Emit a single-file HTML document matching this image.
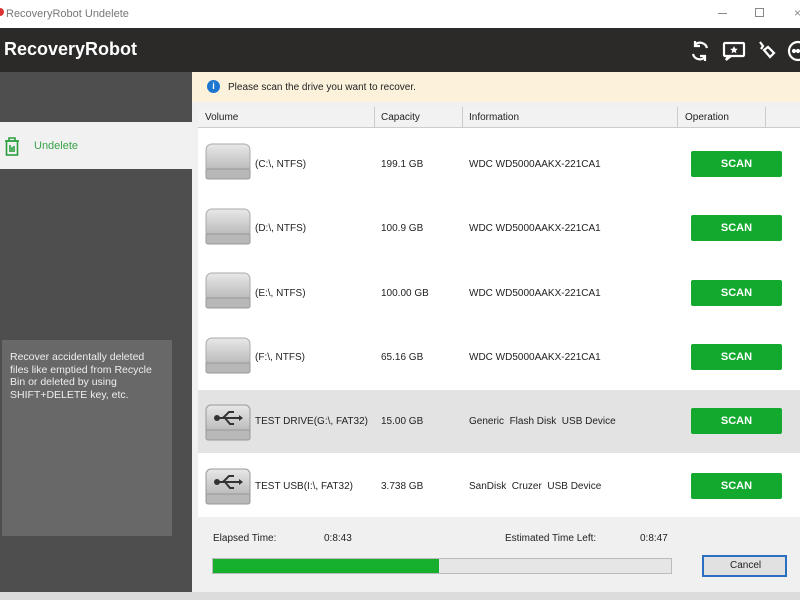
<!DOCTYPE html>
<html><head><style>
*{margin:0;padding:0;box-sizing:border-box}
body{width:800px;height:600px;overflow:hidden;background:#dcdcdc;font-family:"Liberation Sans",sans-serif;position:relative}
.abs{position:absolute}
.t{font-size:10px;color:#222;position:absolute;white-space:nowrap}
.scan{position:absolute;left:691px;width:91px;height:26px;background:#12a92e;border-radius:2px;color:#fff;font-weight:bold;font-size:11px;text-align:center;line-height:26px}
.drv{position:absolute;left:205px;width:46px;height:38px}
</style></head><body>
<div class="abs" style="left:0;top:0;width:800px;height:28px;background:#fff"></div>
<div class="abs" style="left:-4px;top:8px;width:8px;height:8px;border-radius:50%;background:#d33"></div>
<div class="t" style="left:6px;top:8px;font-size:11px;color:#777">RecoveryRobot Undelete</div>
<div class="abs" style="left:718px;top:13px;width:9px;height:1px;background:#888"></div>
<div class="abs" style="left:755px;top:8px;width:9px;height:9px;border:1px solid #888"></div>
<div class="t" style="left:794px;top:6px;font-size:12px;color:#888">×</div>
<div class="abs" style="left:0;top:28px;width:800px;height:44px;background:#2b2a29"></div>
<div class="t" style="left:4px;top:39px;font-size:18px;font-weight:bold;color:#fff">RecoveryRobot</div>
<svg class="abs" style="left:688px;top:38px" width="112" height="26" viewBox="0 0 112 26" fill="none" stroke="#fff" stroke-width="2.2">
<path d="M19 10a7 7 0 0 0-12-3M5 16a7 7 0 0 0 12 3"/><path d="M7 3v5h5M17 23v-5h-5" />
<rect x="36" y="5" width="20" height="13" rx="1"/><path d="M40 18l-2 4 5-4"/><path d="M46 8l1.2 2.6 2.6.3-2 1.8.6 2.6-2.4-1.4-2.4 1.4.6-2.6-2-1.8 2.6-.3z" fill="#fff" stroke="none"/>
<path d="M72 4l3 4-2 3"/><path d="M76 12l4-3 6 6-4 4z"/>
<circle cx="110" cy="13" r="9"/><circle cx="106" cy="13" r="1" fill="#fff"/><circle cx="110" cy="13" r="1" fill="#fff"/>
</svg>
<div class="abs" style="left:0;top:72px;width:192px;height:520px;background:#4e4e4e"></div>
<div class="abs" style="left:0;top:122px;width:192px;height:47px;background:#f1f1f1"></div>
<svg class="abs" style="left:4px;top:137px" width="16" height="19" viewBox="0 0 16 19" fill="none" stroke="#2aa040" stroke-width="1.6"><path d="M1 4h14M5 4V1h6v3"/><rect x="2.5" y="4" width="11" height="14"/><path d="M6 8v7M8 10v5M10 9v6"/></svg>
<div class="t" style="left:34px;top:140px;font-size:11px;color:#3aa34a">Undelete</div>
<div class="abs" style="left:2px;top:340px;width:170px;height:196px;background:#686868"></div>
<div class="t" style="left:10px;top:351px;font-size:10.5px;color:#eee;line-height:12.5px">Recover accidentally deleted<br>files like emptied from Recycle<br>Bin or deleted by using<br>SHIFT+DELETE key, etc.</div>
<div class="abs" style="left:192px;top:72px;width:608px;height:520px;background:#f0f0f0"></div>
<div class="abs" style="left:192px;top:72px;width:608px;height:30px;background:#fcf2dc"></div>
<div class="abs" style="left:207px;top:80px;width:13px;height:13px;border-radius:50%;background:#1d77d0;color:#fff;font-size:9px;font-weight:bold;text-align:center;line-height:13px">i</div>
<div class="t" style="left:228px;top:82px">Please scan the drive you want to recover.</div>
<div class="abs" style="left:198px;top:107px;width:602px;height:410px;background:#fff"></div>
<div class="abs" style="left:198px;top:107px;width:602px;height:21px;background:#f2f2f2;border-bottom:1px solid #ccc"></div>
<div class="abs" style="left:374px;top:107px;width:1px;height:21px;background:#ccc"></div>
<div class="abs" style="left:462px;top:107px;width:1px;height:21px;background:#ccc"></div>
<div class="abs" style="left:677px;top:107px;width:1px;height:21px;background:#ccc"></div>
<div class="abs" style="left:765px;top:107px;width:1px;height:21px;background:#ccc"></div>
<div class="t" style="left:205px;top:112px">Volume</div>
<div class="t" style="left:381px;top:112px">Capacity</div>
<div class="t" style="left:469px;top:112px">Information</div>
<div class="t" style="left:685px;top:112px">Operation</div>
<div class="abs" style="left:198px;top:390px;width:602px;height:63px;background:#e3e3e3"></div>
<svg width="0" height="0" style="position:absolute"><defs><linearGradient id="g" x1="0" y1="0" x2="0" y2="1"><stop offset="0" stop-color="#e8e8e8"/><stop offset="1" stop-color="#aaa"/></linearGradient></defs></svg>
<div class="drv" style="top:143px"><svg width="46" height="38"><rect x="1" y="1" width="44" height="35" rx="6" fill="url(#g)" stroke="#aaa"/><rect x="1" y="26" width="44" height="10" rx="2" fill="#b8b8b8" stroke="#999"/></svg></div>
<div class="drv" style="top:208px"><svg width="46" height="38"><rect x="1" y="1" width="44" height="35" rx="6" fill="url(#g)" stroke="#aaa"/><rect x="1" y="26" width="44" height="10" rx="2" fill="#b8b8b8" stroke="#999"/></svg></div>
<div class="drv" style="top:272px"><svg width="46" height="38"><rect x="1" y="1" width="44" height="35" rx="6" fill="url(#g)" stroke="#aaa"/><rect x="1" y="26" width="44" height="10" rx="2" fill="#b8b8b8" stroke="#999"/></svg></div>
<div class="drv" style="top:337px"><svg width="46" height="38"><rect x="1" y="1" width="44" height="35" rx="6" fill="url(#g)" stroke="#aaa"/><rect x="1" y="26" width="44" height="10" rx="2" fill="#b8b8b8" stroke="#999"/></svg></div>
<div class="drv" style="top:404px"><svg width="46" height="38"><rect x="1" y="1" width="44" height="35" rx="5" fill="url(#g)" stroke="#999"/><rect x="1" y="26" width="44" height="10" rx="2" fill="#b8b8b8" stroke="#999"/><path d="M12 14h22M18 14l6-6h5M20 14l5 6h4" stroke="#333" stroke-width="2" fill="none"/><circle cx="12" cy="14" r="3" fill="#333"/><path d="M34 11l4 3-4 3z" fill="#333"/></svg></div>
<div class="drv" style="top:468px"><svg width="46" height="38"><rect x="1" y="1" width="44" height="35" rx="5" fill="url(#g)" stroke="#999"/><rect x="1" y="26" width="44" height="10" rx="2" fill="#b8b8b8" stroke="#999"/><path d="M12 14h22M18 14l6-6h5M20 14l5 6h4" stroke="#333" stroke-width="2" fill="none"/><circle cx="12" cy="14" r="3" fill="#333"/><path d="M34 11l4 3-4 3z" fill="#333"/></svg></div>

<div class="t" style="left:255px;top:159px">(C:\, NTFS)</div><div class="t" style="left:381px;top:159px">199.1 GB</div><div class="t" style="left:469px;top:159px">WDC WD5000AAKX-221CA1</div><div class="scan" style="top:151px">SCAN</div>
<div class="t" style="left:255px;top:223px">(D:\, NTFS)</div><div class="t" style="left:381px;top:223px">100.9 GB</div><div class="t" style="left:469px;top:223px">WDC WD5000AAKX-221CA1</div><div class="scan" style="top:215px">SCAN</div>
<div class="t" style="left:255px;top:288px">(E:\, NTFS)</div><div class="t" style="left:381px;top:288px">100.00 GB</div><div class="t" style="left:469px;top:288px">WDC WD5000AAKX-221CA1</div><div class="scan" style="top:280px">SCAN</div>
<div class="t" style="left:255px;top:352px">(F:\, NTFS)</div><div class="t" style="left:381px;top:352px">65.16 GB</div><div class="t" style="left:469px;top:352px">WDC WD5000AAKX-221CA1</div><div class="scan" style="top:344px">SCAN</div>
<div class="t" style="left:255px;top:416px">TEST DRIVE(G:\, FAT32)</div><div class="t" style="left:381px;top:416px">15.00 GB</div><div class="t" style="left:469px;top:416px">Generic&nbsp; Flash Disk&nbsp; USB Device</div><div class="scan" style="top:408px">SCAN</div>
<div class="t" style="left:255px;top:481px">TEST USB(I:\, FAT32)</div><div class="t" style="left:381px;top:481px">3.738 GB</div><div class="t" style="left:469px;top:481px">SanDisk&nbsp; Cruzer&nbsp; USB Device</div><div class="scan" style="top:473px">SCAN</div>

<div class="t" style="left:213px;top:533px">Elapsed Time:</div>
<div class="t" style="left:324px;top:533px">0:8:43</div>
<div class="t" style="left:505px;top:533px">Estimated Time Left:</div>
<div class="t" style="left:640px;top:533px">0:8:47</div>
<div class="abs" style="left:212px;top:558px;width:460px;height:16px;background:#e6e6e6;border:1px solid #bbb"></div>
<div class="abs" style="left:213px;top:559px;width:226px;height:14px;background:#16b02e"></div>
<div class="abs" style="left:702px;top:555px;width:85px;height:22px;background:#e1e1e1;border:2px solid #2a6fc0"></div>
<div class="t" style="left:730px;top:560px">Cancel</div>
<div class="abs" style="left:0;top:592px;width:800px;height:8px;background:#dcdcdc"></div>
</body></html>
